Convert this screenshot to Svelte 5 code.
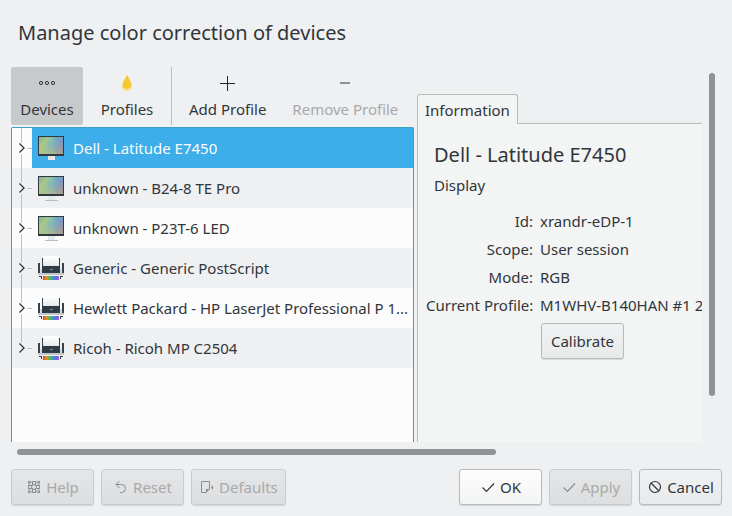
<script>
  const devices = [
    { name: 'Dell - Latitude E7450', kind: 'display' },
    { name: 'unknown - B24-8 TE Pro', kind: 'display' },
    { name: 'unknown - P23T-6 LED', kind: 'display' },
    { name: 'Generic - Generic PostScript', kind: 'printer' },
    { name: 'Hewlett Packard - HP LaserJet Professional P 1...', kind: 'printer' },
    { name: 'Ricoh - Ricoh MP C2504', kind: 'printer' },
  ];

  const details = [
    ['Id:', 'xrandr-eDP-1'],
    ['Scope:', 'User session'],
    ['Mode:', 'RGB'],
    ['Current Profile:', 'M1WHV-B140HAN #1 2'],
  ];

  let view = $state('devices');
  let selected = $state(0);
</script>

<svg class="defs" width="0" height="0" aria-hidden="true">
  <defs>
    <linearGradient id="screen" x1="0" y1="0" x2="1" y2="0.6">
      <stop offset="0" stop-color="#6db0a6" />
      <stop offset="0.3" stop-color="#a3c490" />
      <stop offset="0.5" stop-color="#6fbcbd" />
      <stop offset="0.7" stop-color="#7aa3cc" />
      <stop offset="1" stop-color="#8b80b4" />
    </linearGradient>
    <linearGradient id="glow" x1="0" y1="1" x2="0.5" y2="0">
      <stop offset="0" stop-color="#c3c973" stop-opacity="0.8" />
      <stop offset="1" stop-color="#c3c973" stop-opacity="0" />
    </linearGradient>
    <linearGradient id="paper" x1="0" y1="0" x2="0" y2="1">
      <stop offset="0" stop-color="#ffffff" />
      <stop offset="1" stop-color="#e3e8ea" />
    </linearGradient>
    <linearGradient id="rainbow">
      <stop offset="0" stop-color="#e0443a" />
      <stop offset="0.2" stop-color="#ee8a2c" />
      <stop offset="0.4" stop-color="#58b947" />
      <stop offset="0.6" stop-color="#3f9fc4" />
      <stop offset="0.8" stop-color="#5f6fe0" />
      <stop offset="1" stop-color="#b05bd0" />
    </linearGradient>
  </defs>
</svg>

{#snippet displayIcon(active)}
  <svg class="device-icon" viewBox="0 0 32 32" aria-hidden="true">
    <path d="M13 24h7v4h-7z" fill="#e6e9ea" />
    {#if !active}
      <path d="M10 28h13v1H10z" fill="#b9bdc0" />
    {/if}
    <path d="M3 4h26v20H3z" fill="#2f3943" />
    <path d="M4 5h24v17H4z" fill="url(#screen)" />
    <path d="M4 5h24v17H4z" fill="url(#glow)" />
    <path d="M16 5l3 0 5 8-5 9-3-9z" fill="#83c5cb" opacity="0.3" />
    <path d="M19 5l7 0-4 17-5-9z" fill="#6681b6" opacity="0.15" />
  </svg>
{/snippet}

{#snippet printerIcon()}
  <svg class="device-icon" viewBox="0 0 32 32" aria-hidden="true">
    <path d="M5 17h22v6H5z" fill="#d5dade" />
    <path d="M3 11h2v10H3zM27 11h2v10h-2z" fill="#36434e" />
    <path d="M7 6h18v10H7z" fill="#36434e" />
    <path d="M8 4h16v11H8z" fill="url(#paper)" />
    <path d="M7 14h18v7H7z" fill="#2f3b46" />
    <path d="M15 18l3-1" stroke="#8b969f" />
    <path d="M3 21h26v2H3z" fill="#c0c6ca" />
    <path d="M4 24h3v3H6v-2H4zM28 24h-3v3h1v-2h2z" fill="#36434e" />
    <path d="M8 24h16v4H8z" fill="url(#rainbow)" />
  </svg>
{/snippet}

<main>
  <h1>Manage color correction of devices</h1>

  <div class="viewport">
    <div class="columns">
      <section class="left">
        <div class="toolbar" role="toolbar" aria-label="Color management">
          <button class:checked={view === 'devices'} onclick={() => (view = 'devices')}>
            <svg viewBox="0 0 22 22" aria-hidden="true">
              <g fill="none" stroke="#31363b">
                <circle cx="5" cy="11" r="1.6" />
                <circle cx="11" cy="11" r="1.6" />
                <circle cx="17" cy="11" r="1.6" />
              </g>
            </svg>
            Devices
          </button>
          <button class:checked={view === 'profiles'} onclick={() => (view = 'profiles')}>
            <svg viewBox="0 0 22 22" aria-hidden="true">
              <path d="M11 3c2 4 5 7 5 11a5 5 0 0 1-10 0c0-4 3-7 5-11z" fill="#f8d56b" />
              <path d="M11 3c2 4 4 7 4 10.500a4 4 0 0 1-7.500 2.500C6 12 9.500 7 11 3z" fill="#f5c832" />
              <path d="M8 16.500a4.300 4.300 0 0 0 7-1.500" fill="none" stroke="#fdf0c0" />
            </svg>
            Profiles
          </button>
          <span class="separator"></span>
          <button>
            <svg viewBox="0 0 22 22" aria-hidden="true">
              <path d="M3 11.500h15M10.500 4v15" stroke="#232629" />
            </svg>
            Add Profile
          </button>
          <button disabled>
            <svg viewBox="0 0 22 22" aria-hidden="true">
              <path d="M6 11h10" stroke="#909294" stroke-width="2" />
            </svg>
            Remove Profile
          </button>
        </div>

        <ul class="tree">
          {#each devices as device, i}
            <li>
              <button class="expander" aria-label="Expand {device.name}">
                <svg viewBox="0 0 20 40" aria-hidden="true">
                  <path class="branch" d="M9.500 0v15M15 20.500h5" />
                  {#if i < devices.length - 1}
                    <path class="branch" d="M9.500 26v14" />
                  {/if}
                  <path class="chevron" d="M7.500 15.500l4.500 4.500-4.500 4.500" />
                </svg>
              </button>
              <button class="device" class:selected={selected === i} onclick={() => (selected = i)}>
                {#if device.kind === 'display'}
                  {@render displayIcon(selected === i)}
                {:else}
                  {@render printerIcon()}
                {/if}
                <span>{device.name}</span>
              </button>
            </li>
          {/each}
        </ul>
      </section>

      <section class="right">
        <div class="tabs" role="tablist">
          <button class="tab" role="tab" aria-selected="true">Information</button>
        </div>
        <div class="pane" role="tabpanel">
          <h2>Dell - Latitude E7450</h2>
          <p>Display</p>
          <dl>
            {#each details as [label, value]}
              <dt>{label}</dt>
              <dd>{value}</dd>
            {/each}
          </dl>
          <button class="push calibrate">Calibrate</button>
        </div>
      </section>
    </div>
    <div class="vbar"><div class="thumb"></div></div>
    <div class="hbar"><div class="thumb"></div></div>
  </div>

  <footer>
    <button class="push" disabled>
      <svg viewBox="0 0 16 16" aria-hidden="true">
        <g fill="none" stroke="currentColor">
          <circle cx="8" cy="8" r="5.500" />
          <circle cx="8" cy="8" r="2.500" />
          <path d="M6.500 2.500v4h-4M9.500 2.500v4h4M6.500 13.500v-4h-4M9.500 13.500v-4h4" />
        </g>
        <path d="M2 2h3L2 5zM14 2h-3l3 3zM2 14h3l-3-3zM14 14h-3l3-3z" fill="currentColor" />
      </svg>
      Help
    </button>
    <button class="push" disabled>
      <svg viewBox="0 0 16 16" aria-hidden="true">
        <path d="M6.500 2L3 5.500 6.500 9M3 5.500h5.500a4 4 0 0 1 0 8H7" fill="none" stroke="currentColor" />
      </svg>
      Reset
    </button>
    <button class="push" disabled>
      <svg viewBox="0 0 16 16" aria-hidden="true">
        <path d="M7 13.500H2.500v-11h8V10" fill="none" stroke="currentColor" />
        <path d="M7 10h4l-4 4zM14 6v5l-2-2.500z" fill="currentColor" />
      </svg>
      Defaults
    </button>
    <span class="spacer"></span>
    <button class="push default">
      <svg viewBox="0 0 16 16" aria-hidden="true">
        <path d="M2.500 8.500l4 4 7.500-8" fill="none" stroke="currentColor" stroke-width="1.200" />
      </svg>
      OK
    </button>
    <button class="push" disabled>
      <svg viewBox="0 0 16 16" aria-hidden="true">
        <path d="M2.500 8.500l4 4 7.500-8" fill="none" stroke="currentColor" stroke-width="1.200" />
      </svg>
      Apply
    </button>
    <button class="push">
      <svg viewBox="0 0 16 16" aria-hidden="true">
        <g fill="none" stroke="currentColor" stroke-width="1.200">
          <circle cx="8" cy="8" r="5.500" />
          <path d="M4 4l8 8" />
        </g>
      </svg>
      Cancel
    </button>
  </footer>
</main>

<style>
  :global(body) {
    margin: 0;
    background: #eff0f1;
  }

  main,
  button {
    font-family: 'Noto Sans', sans-serif;
    font-size: 15px;
    line-height: 20px;
    color: #31363b;
  }

  main {
    box-sizing: border-box;
    min-height: 100vh;
    display: flex;
    flex-direction: column;
    padding: 0 10px 11px 11px;
  }

  button {
    margin: 0;
    padding: 0;
    border: none;
    background: none;
    white-space: nowrap;
  }

  button:disabled {
    color: #a8a9aa;
  }

  svg {
    flex: none;
    display: block;
  }

  .defs {
    position: absolute;
  }

  h1,
  h2 {
    margin: 0;
    font-size: 20px;
    line-height: 28px;
    font-weight: 400;
  }

  h1 {
    padding: 19px 7px 20px;
  }

  .viewport {
    flex: 1;
    display: grid;
    grid-template-columns: minmax(0, 1fr) 6px;
    grid-template-rows: 1fr 6px;
    column-gap: 7px;
    row-gap: 7px;
    padding-right: 7px;
  }

  .columns {
    display: grid;
    grid-template-columns: minmax(0, 403fr) minmax(0, 285fr);
    gap: 3px;
  }

  .vbar {
    padding: 6px 0;
  }

  .hbar {
    padding: 0 6px;
  }

  .thumb {
    background: #909294;
    border-radius: 3px;
  }

  .vbar .thumb {
    height: 89%;
  }

  .hbar .thumb {
    width: 70.5%;
    height: 6px;
  }

  .left,
  .right {
    display: flex;
    flex-direction: column;
  }

  .toolbar {
    display: flex;
    gap: 8px;
    margin-bottom: 2px;
  }

  .toolbar button {
    min-width: 72px;
    display: flex;
    flex-direction: column;
    align-items: center;
    gap: 5px;
    padding: 5px 9px 6px;
    border-radius: 2px;
  }

  .toolbar svg {
    width: 22px;
    height: 22px;
  }

  .toolbar .checked {
    background: #c8c9ca;
  }

  .separator {
    width: 1px;
    background: #bcbebf;
  }

  .tree {
    flex: 1;
    margin: 0;
    padding: 0;
    list-style: none;
    background: #fcfcfc;
    border: 1px solid #3f9fc0;
    border-bottom: none;
    border-radius: 2px 2px 0 0;
  }

  .tree li {
    display: flex;
    height: 40px;
  }

  .tree li:nth-child(even) {
    background: #eff0f1;
  }

  .expander svg {
    width: 20px;
    height: 40px;
    fill: none;
  }

  .branch {
    stroke: #bfc1c2;
  }

  .chevron {
    stroke: #31363b;
    stroke-width: 1.3;
  }

  .device {
    flex: 1;
    min-width: 0;
    display: flex;
    align-items: center;
    gap: 6px;
    padding: 0 3px;
    text-align: left;
  }

  .device span {
    overflow: hidden;
    text-overflow: ellipsis;
  }

  .device.selected {
    background: #3daee9;
    color: #fcfcfc;
  }

  .device-icon {
    width: 32px;
    height: 32px;
  }

  .right {
    padding-top: 27px;
  }

  .tabs {
    display: flex;
  }

  .tabs::after {
    content: '';
    flex: 1;
    border-bottom: 1px solid #b9bbbc;
  }

  .tab {
    padding: 5px 7px;
    background: #f3f4f4;
    border: 1px solid #b9bbbc;
    border-bottom: none;
    border-radius: 3px 3px 0 0;
    height: 30px;
  }

  .pane {
    flex: 1;
    overflow: hidden;
    background: #f3f4f4;
    border-left: 1px solid #b9bbbc;
  }

  h2 {
    padding: 17px 16px 0;
  }

  p {
    margin: 0;
    padding: 6px 16px 12px;
  }

  dl {
    margin: 0;
    padding-left: 8px;
    display: grid;
    grid-template-columns: 107px max-content;
    column-gap: 7px;
    line-height: 28px;
    white-space: nowrap;
  }

  dt {
    text-align: right;
  }

  dd {
    margin: 0;
  }

  .push {
    box-sizing: border-box;
    min-width: 83px;
    height: 36px;
    display: flex;
    align-items: center;
    justify-content: center;
    gap: 4px;
    padding: 0 7px;
    border: 1px solid #b7b9ba;
    border-radius: 3px;
    background: linear-gradient(#f1f2f3, #e8e9ea);
    box-shadow: 0 1px 1px rgba(0, 0, 0, 0.12);
  }

  .push svg {
    width: 16px;
    height: 16px;
  }

  .push.default {
    background: linear-gradient(#fdfdfd, #f3f4f4);
  }

  .push:disabled {
    background: linear-gradient(#e5e6e7, #dddedf);
    border-color: #c9cbcc;
  }

  .push:disabled svg {
    color: #8b8d8f;
  }

  .calibrate {
    margin: 4px 0 0 123px;
  }

  footer {
    display: flex;
    gap: 7px;
    padding-top: 14px;
  }

  .spacer {
    flex: 1;
  }
</style>
